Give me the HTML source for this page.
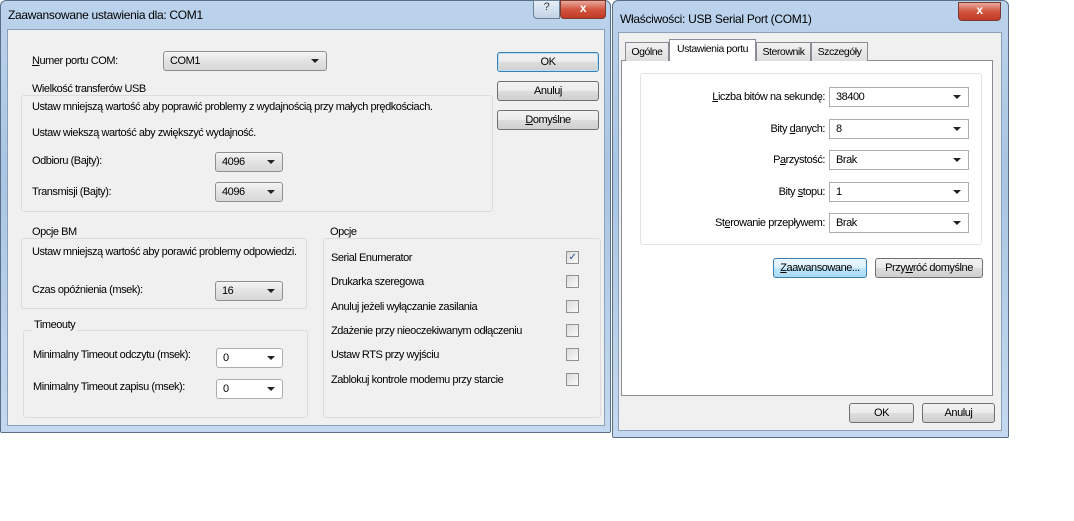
<!DOCTYPE html>
<html><head><meta charset="utf-8"><style>
*{box-sizing:border-box;margin:0;padding:0}
body{width:1074px;height:521px;background:#fff;position:relative;overflow:hidden;font-family:"Liberation Sans",sans-serif;font-size:11px;letter-spacing:-0.45px;color:#000}
.a{position:absolute;white-space:nowrap}
.win{position:absolute;border:1px solid #5a6f87;border-radius:6px 6px 2px 2px;background:linear-gradient(#bcd3ec,#a9c5e3 40%,#c4d9ef)}
.client{position:absolute;background:#f0f0f0;border:1px solid #8aa0b8}
.title{position:absolute;font-size:12px;letter-spacing:-0.3px}
.cb{position:absolute;height:20px;border:1px solid #8e8f8f;border-radius:3px;background:linear-gradient(#f4f4f4,#e3e3e3 50%,#d8d8d8);padding:3px 6px;font-size:11px}
.cb.w{background:#fff;border-color:#abadb3;border-radius:0}
.cb::after{content:"";position:absolute;right:7px;top:7px;border:4px solid transparent;border-top:4px solid #222;border-bottom:0}
.btn{position:absolute;height:20px;border:1px solid #707070;border-radius:3px;background:linear-gradient(#f2f2f2,#ebebeb 50%,#dddddd 51%,#cfcfcf);text-align:center;padding-top:3px;white-space:nowrap}
.btn.def{border-color:#3c7fb1;box-shadow:inset 0 0 0 1px #b5e2f8}
.btn.hot{border-color:#3c7fb1;background:linear-gradient(#eaf6fd,#d9f0fc 50%,#bee6fd 51%,#a7d9f5)}
.grp{position:absolute;border:1px solid #dcdcdc;border-radius:3px}
.gl{position:absolute;background:#f0f0f0;padding:0 2px}
.chk{position:absolute;width:13px;height:13px;border:1px solid #8f8f8f;background:linear-gradient(135deg,#dcdcdc,#fafafa)}
.tab{position:absolute;height:19px;border:1px solid #898c95;border-bottom:0;background:linear-gradient(#f2f2f2,#dedede);padding:3px 0 0 0;text-align:center;white-space:nowrap;font-size:10.5px}
u{text-decoration:underline}
.xb{position:absolute;height:19px;border:1px solid #7a3a34;border-radius:0 0 4px 4px;background:linear-gradient(#e9a99c,#d2553f 50%,#c13a26);color:#fff;font-weight:bold;text-align:center;font-size:12px}
.qb{position:absolute;height:19px;border:1px solid #6b7f95;border-radius:0 0 0 4px;background:linear-gradient(#e6eef7,#c2d3e6);color:#333;text-align:center;font-size:11px}
</style></head><body>

<!-- Left window -->
<div class="win" style="left:0;top:0;width:611px;height:433px"></div>
<div class="title" style="left:8px;top:8px">Zaawansowane ustawienia dla: COM1</div>
<div class="qb" style="left:533px;top:0;width:27px">?</div>
<div class="xb" style="left:560px;top:0;width:46px">x</div>
<div class="client" style="left:7px;top:29px;width:598px;height:397px"></div>

<div class="a" style="left:32px;top:55px"><u>N</u>umer portu COM:</div>
<div class="cb" style="left:163px;top:51px;width:164px">COM1</div>
<div class="btn def" style="left:497px;top:52px;width:102px">OK</div>
<div class="btn" style="left:497px;top:81px;width:102px">Anuluj</div>
<div class="btn" style="left:497px;top:110px;width:102px"><u>D</u>omyślne</div>

<div class="grp" style="left:21px;top:95px;width:472px;height:117px"></div>
<div class="gl" style="left:30px;top:83px">Wielkość transferów USB</div>
<div class="a" style="left:32px;top:101px">Ustaw mniejszą wartość aby poprawić problemy z wydajnością przy małych prędkościach.</div>
<div class="a" style="left:32px;top:127px">Ustaw wiekszą wartość aby zwiększyć wydajność.</div>
<div class="a" style="left:32px;top:155px">Odbioru (Bajty):</div>
<div class="cb" style="left:215px;top:152px;width:68px">4096</div>
<div class="a" style="left:32px;top:186px">Transmisji (Bajty):</div>
<div class="cb" style="left:215px;top:182px;width:68px">4096</div>

<div class="grp" style="left:21px;top:238px;width:286px;height:71px"></div>
<div class="gl" style="left:30px;top:226px">Opcje BM</div>
<div class="a" style="left:32px;top:246px">Ustaw mniejszą wartość aby porawić problemy odpowiedzi.</div>
<div class="a" style="left:32px;top:284px">Czas opóźnienia (msek):</div>
<div class="cb" style="left:215px;top:281px;width:68px">16</div>

<div class="grp" style="left:23px;top:330px;width:285px;height:88px"></div>
<div class="gl" style="left:32px;top:319px">Timeouty</div>
<div class="a" style="left:33px;top:349px">Minimalny Timeout odczytu (msek):</div>
<div class="cb w" style="left:216px;top:348px;width:67px;border-radius:3px">0</div>
<div class="a" style="left:33px;top:381px">Minimalny Timeout zapisu (msek):</div>
<div class="cb w" style="left:216px;top:379px;width:67px;border-radius:3px">0</div>

<div class="grp" style="left:323px;top:238px;width:278px;height:180px"></div>
<div class="gl" style="left:328px;top:226px">Opcje</div>
<div class="a" style="left:331px;top:252px">Serial Enumerator</div>
<div class="a" style="left:331px;top:276px">Drukarka szeregowa</div>
<div class="a" style="left:331px;top:301px">Anuluj jeżeli wyłączanie zasilania</div>
<div class="a" style="left:331px;top:325px">Zdażenie przy nieoczekiwanym odłączeniu</div>
<div class="a" style="left:331px;top:349px">Ustaw RTS przy wyjściu</div>
<div class="a" style="left:331px;top:374px">Zablokuj kontrole modemu przy starcie</div>
<div class="chk" style="left:566px;top:251px;font-size:10px;color:#2a4c9a;text-align:center;line-height:11px">✓</div>
<div class="chk" style="left:566px;top:275px"></div>
<div class="chk" style="left:566px;top:300px"></div>
<div class="chk" style="left:566px;top:324px"></div>
<div class="chk" style="left:566px;top:348px"></div>
<div class="chk" style="left:566px;top:373px"></div>

<!-- Right window -->
<div class="win" style="left:612px;top:0;width:397px;height:438px"></div>
<div class="title" style="left:620px;top:12px">Właściwości: USB Serial Port (COM1)</div>
<div class="xb" style="left:958px;top:2px;width:43px">x</div>
<div class="client" style="left:618px;top:32px;width:384px;height:399px"></div>
<div style="position:absolute;left:621px;top:60px;width:372px;height:336px;background:#fff;border:1px solid #898c95"></div>
<div class="tab" style="left:625px;top:42px;width:44px">Ogólne</div>
<div class="tab" style="left:669px;top:39px;width:87px;height:22px;background:#fff">Ustawienia portu</div>
<div class="tab" style="left:756px;top:42px;width:55px">Sterownik</div>
<div class="tab" style="left:811px;top:42px;width:57px">Szczegóły</div>
<div class="grp" style="left:640px;top:73px;width:342px;height:172px;border-color:#e3e3e3"></div>

<div class="a" style="right:249px;top:91px"><u>L</u>iczba bitów na sekundę:</div>
<div class="cb w" style="left:829px;top:87px;width:140px">38400</div>
<div class="a" style="right:249px;top:123px">Bity <u>d</u>anych:</div>
<div class="cb w" style="left:829px;top:119px;width:140px">8</div>
<div class="a" style="right:249px;top:154px">P<u>a</u>rzystość:</div>
<div class="cb w" style="left:829px;top:150px;width:140px">Brak</div>
<div class="a" style="right:249px;top:186px">Bity <u>s</u>topu:</div>
<div class="cb w" style="left:829px;top:182px;width:140px">1</div>
<div class="a" style="right:249px;top:217px">St<u>e</u>rowanie przepływem:</div>
<div class="cb w" style="left:829px;top:213px;width:140px">Brak</div>

<div class="btn hot" style="left:773px;top:258px;width:94px"><u>Z</u>aawansowane...</div>
<div class="btn" style="left:875px;top:258px;width:108px">Przy<u>w</u>róć domyślne</div>
<div class="btn" style="left:849px;top:403px;width:65px">OK</div>
<div class="btn" style="left:922px;top:403px;width:73px">Anuluj</div>
</body></html>
